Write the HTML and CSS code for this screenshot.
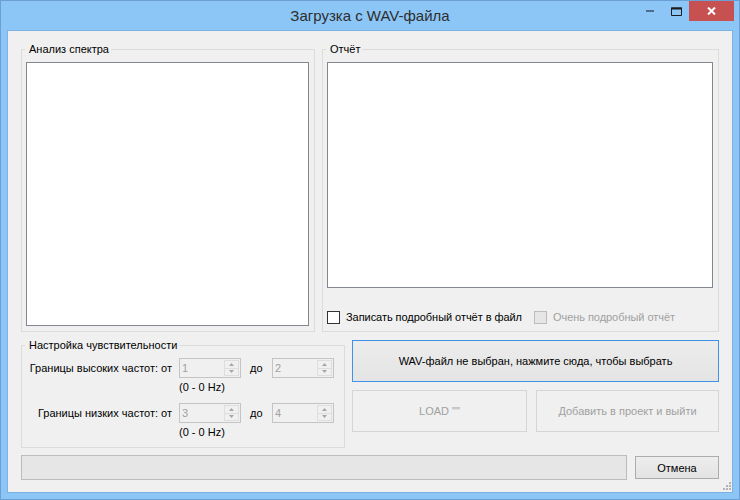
FILE: index.html
```html
<!DOCTYPE html>
<html lang="ru">
<head>
<meta charset="utf-8">
<title>Загрузка с WAV-файла</title>
<link rel="stylesheet" href="styles.css">
</head>
<body>
<div class="window">
  <div class="titlebar">
    <div class="spacer"></div>
    <div class="title">Загрузка с WAV-файла</div>
    <div class="controls">
      <span class="ctl"><svg width="8" height="2" viewBox="0 0 8 2"><rect width="8" height="2" fill="#4f6c8a"/></svg></span>
      <span class="ctl"><svg width="11" height="9" viewBox="0 0 11 9"><path d="M0.5 1h10v7.5h-10z" fill="none" stroke="#1c1c1c"/><path d="M0 1.5h11" stroke="#1c1c1c" stroke-width="2"/></svg></span>
      <span class="ctl close"><svg width="9" height="8" viewBox="0 0 9 8"><path d="M1 0.5L8 7.5M8 0.5L1 7.5" stroke="#fff" stroke-width="2"/></svg></span>
    </div>
  </div>
  <div class="client">
    <div class="row row-top">
      <fieldset class="group spectrum">
        <legend>Анализ спектра</legend>
        <div class="box"></div>
      </fieldset>
      <fieldset class="group report">
        <legend>Отчёт</legend>
        <div class="box"></div>
        <div class="checks">
          <label class="check"><span class="cb"></span>Записать подробный отчёт в файл</label>
          <label class="check disabled"><span class="cb"></span>Очень подробный отчёт</label>
        </div>
      </fieldset>
    </div>
    <div class="row row-mid">
      <fieldset class="group sens">
        <legend>Настройка чувствительности</legend>
        <div class="sens-grid">
          <span class="lbl">Границы высоких частот: от</span>
          <div class="nud"><span class="val">1</span><span class="spin"><span class="half"><svg width="5" height="3" viewBox="0 0 5 3"><polygon points="0,3 5,3 2.5,0" fill="#a6a6a6"/></svg></span><span class="half low"><svg width="5" height="3" viewBox="0 0 5 3"><polygon points="0,0 5,0 2.5,3" fill="#a6a6a6"/></svg></span></span></div>
          <span class="to">до</span>
          <div class="nud"><span class="val">2</span><span class="spin"><span class="half"><svg width="5" height="3" viewBox="0 0 5 3"><polygon points="0,3 5,3 2.5,0" fill="#a6a6a6"/></svg></span><span class="half low"><svg width="5" height="3" viewBox="0 0 5 3"><polygon points="0,0 5,0 2.5,3" fill="#a6a6a6"/></svg></span></span></div>
          <span class="hz">(0 - 0 Hz)</span>
          <span class="lbl">Границы низких частот: от</span>
          <div class="nud"><span class="val">3</span><span class="spin"><span class="half"><svg width="5" height="3" viewBox="0 0 5 3"><polygon points="0,3 5,3 2.5,0" fill="#a6a6a6"/></svg></span><span class="half low"><svg width="5" height="3" viewBox="0 0 5 3"><polygon points="0,0 5,0 2.5,3" fill="#a6a6a6"/></svg></span></span></div>
          <span class="to">до</span>
          <div class="nud"><span class="val">4</span><span class="spin"><span class="half"><svg width="5" height="3" viewBox="0 0 5 3"><polygon points="0,3 5,3 2.5,0" fill="#a6a6a6"/></svg></span><span class="half low"><svg width="5" height="3" viewBox="0 0 5 3"><polygon points="0,0 5,0 2.5,3" fill="#a6a6a6"/></svg></span></span></div>
          <span class="hz">(0 - 0 Hz)</span>
        </div>
      </fieldset>
      <div class="actions">
        <button class="btn primary">WAV-файл не выбран, нажмите сюда, чтобы выбрать</button>
        <div class="actions-row">
          <button class="btn load" disabled>LOAD ""</button>
          <button class="btn add" disabled>Добавить в проект и выйти</button>
        </div>
      </div>
    </div>
    <div class="row row-bottom">
      <div class="progress"></div>
      <button class="btn cancel">Отмена</button>
    </div>
    <svg class="grip" width="8" height="8" viewBox="0 0 8 8">
      <g fill="#b4b4b4">
        <rect x="6" y="0" width="2" height="2"/>
        <rect x="3" y="3" width="2" height="2"/><rect x="6" y="3" width="2" height="2"/>
        <rect x="0" y="6" width="2" height="2"/><rect x="3" y="6" width="2" height="2"/><rect x="6" y="6" width="2" height="2"/>
      </g>
    </svg>
  </div>
</div>
</body>
</html>
```
FILE: styles.css
```css
* { box-sizing: border-box; }
html, body { margin: 0; padding: 0; }
body {
  width: 740px;
  height: 500px;
  font-family: "Liberation Sans", Arial, sans-serif;
  font-size: 11px;
  color: #000;
  overflow: hidden;
}
.window {
  width: 740px;
  height: 500px;
  background: #8cc6f6;
  border: 1px solid #6b9fd6;
  padding: 0 7px 7px 7px;
  display: flex;
  flex-direction: column;
}
.titlebar {
  height: 30px;
  margin: 0 -7px;
  display: grid;
  grid-template-columns: 1fr auto 1fr;
  align-items: start;
}
.title {
  font-size: 15px;
  line-height: 30px;
  color: #2e2e2e;
  white-space: nowrap;
}
.controls {
  display: flex;
  justify-content: flex-end;
  padding-right: 5px;
}
.ctl {
  width: 26px;
  height: 20px;
  display: flex;
  align-items: center;
  justify-content: center;
}
.ctl.close {
  width: 45px;
  background: #c75050;
}
.client {
  position: relative;
  flex: 1;
  background: #f0f0f0;
  box-shadow: 0 0 0 1px #7fb2e4;
  padding: 11px 13px 12px 13px;
  display: flex;
  flex-direction: column;
}
.row { display: flex; }
.row-top { height: 290px; gap: 7px; }
.row-mid { height: 110px; gap: 7px; margin-top: 6px; }
.row-bottom { height: 25px; gap: 8px; margin-top: 7px; align-items: center; }

.group {
  margin: 0;
  min-width: 0;
  border: 1px solid #dcdcdc;
  padding: 6px 5px 5px 4px;
  display: flex;
  flex-direction: column;
}
.group legend {
  font-size: 11px;
  line-height: 14px;
  padding: 0 2px 0 4px;
  margin-left: -1px;
}
.spectrum { width: 294px; }
.report { flex: 1; }
.box {
  flex: 1;
  background: #fff;
  border: 1px solid #828790;
}
.checks {
  height: 14px;
  margin-top: 23px;
  margin-bottom: 1px;
  display: flex;
  gap: 12px;
  align-items: flex-start;
}
.check {
  display: flex;
  align-items: flex-start;
  gap: 6px;
  line-height: 13px;
  white-space: nowrap;
  letter-spacing: -0.05px;
}
.cb {
  width: 13px;
  height: 13px;
  background: #fff;
  border: 1px solid #333;
}
.check.disabled { color: #a0a0a0; }
.check.disabled .cb { background: #e6e6e6; border-color: #bcbcbc; }

.sens { width: 324px; }
.sens-grid {
  display: grid;
  grid-template-columns: 153px 62px 31px 62px;
  grid-template-rows: 20px 25px 20px 13px;
  align-items: center;
}
.lbl {
  text-align: right;
  padding-right: 7px;
  white-space: nowrap;
}
.to { padding-left: 9px; }
.hz {
  grid-column: 2 / span 3;
  align-self: start;
  margin-top: 3px;
  line-height: 13px;
}
.nud {
  height: 20px;
  border: 1px solid #c4c4c4;
  background: #f0f0f0;
  display: flex;
}
.val {
  flex: 1;
  color: #a0a0a0;
  padding-left: 2px;
  line-height: 18px;
}
.spin {
  width: 15px;
  margin: 1px 1px 1px 0;
  display: flex;
  flex-direction: column;
  border: 1px solid #dedede;
}
.half {
  flex: 1;
  display: flex;
  align-items: center;
  justify-content: center;
}
.half.low { border-top: 1px solid #dedede; }

.actions {
  flex: 1;
  padding-top: 2px;
  display: flex;
  flex-direction: column;
  gap: 8px;
}
.actions-row { display: flex; gap: 9px; }
.btn {
  font-family: inherit;
  font-size: 11px;
  color: #000;
  height: 42px;
  margin: 0;
  padding: 0;
  border: 1px solid #acacac;
  background: linear-gradient(#ededed, #e3e3e3);
  border-radius: 0;
}
.btn.primary {
  border-color: #3c93e8;
  background: linear-gradient(#ececec, #e4e4e4);
}
.btn:disabled {
  color: #a0a0a0;
  border-color: #d5d5d5;
  background: #f0f0f0;
}
.load { width: 175px; }
.add { flex: 1; }
.progress {
  flex: 1;
  height: 25px;
  background: #e6e6e6;
  border: 1px solid #bcbcbc;
}
.cancel {
  width: 84px;
  height: 23px;
}
.grip {
  position: absolute;
  right: 1px;
  bottom: 2px;
}
```
